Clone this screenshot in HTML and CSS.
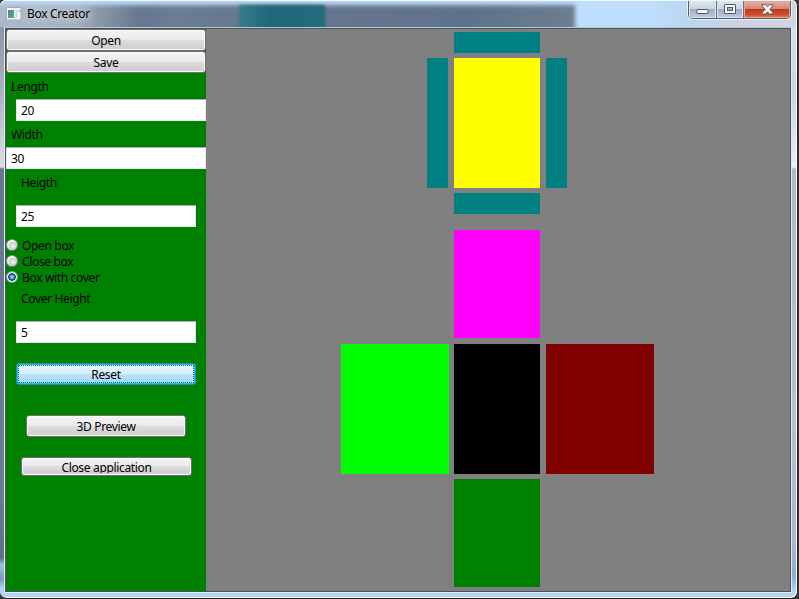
FILE: index.html
```html
<!DOCTYPE html>
<html lang="en">
<head>
<meta charset="utf-8">
<title>Box Creator</title>
<link rel="stylesheet" href="styles.css">
</head>
<body>
<div class="window">
  <header class="titlebar">
    <div class="glass-shadow"></div>
    <div class="glass-teal"></div>
    <svg class="app-icon" width="16" height="14" viewBox="0 0 16 14">
      <defs><linearGradient id="pic" x2="0.6" y2="1"><stop stop-color="#4d7fb8"/><stop offset="1" stop-color="#58a873"/></linearGradient></defs>
      <rect x=".5" y=".5" width="14.500" height="12.500" rx="1" fill="#f3f4f4" stroke="#a4abb1"/>
      <rect x="2" y="3" width="6" height="8" fill="url(#pic)"/>
      <rect x="9" y="3" width="3" height="8" fill="#dde1e3"/>
      <rect x="13" y="3" width="1" height="2" fill="#a5adb5"/>
    </svg>
    <h1 class="title">Box Creator</h1>
    <div class="controls">
      <span class="control control-min"><svg width="13" height="6" viewBox="0 0 13 6"><rect x="1" y=".5" width="11" height="4" rx=".5" fill="#fff" stroke="#535666"/></svg></span>
      <span class="control control-max"><svg width="13" height="11" viewBox="0 0 13 11"><rect x=".5" y=".5" width="11" height="9" rx=".5" fill="#fff" stroke="#535666"/><rect x="3.500" y="3.500" width="5" height="3" fill="#a9b7ca" stroke="#535666"/></svg></span>
      <span class="control control-close"><svg width="13" height="11" viewBox="0 0 13 11"><path d="M1 .7H4.600L6.500 2.800 8.400 .7H12V1.800L8.800 5.300 12 8.800V10H8.400L6.500 7.900 4.600 10H1V8.800L4.200 5.300 1 1.800Z" fill="#fff" stroke="#60505c"/></svg></span>
    </div>
  </header>
  <main class="client">
    <form class="sidebar">
      <button type="button" class="button open">Open</button>
      <button type="button" class="button save">Save</button>
      <label class="label length-label" for="length">Length</label>
      <input class="field length" id="length" value="20">
      <label class="label width-label" for="width">Width</label>
      <input class="field width" id="width" value="30">
      <label class="label height-label" for="height">Heigth</label>
      <input class="field height" id="height" value="25">
      <div class="radios">
        <label class="radio"><span class="dot"></span>Open box</label>
        <label class="radio"><span class="dot"></span>Close box</label>
        <label class="radio"><span class="dot checked"></span>Box with cover</label>
      </div>
      <label class="label cover-label" for="cover">Cover Height</label>
      <input class="field cover" id="cover" value="5">
      <button type="button" class="button reset">Reset</button>
      <button type="button" class="button preview">3D Preview</button>
      <button type="button" class="button close"><span class="clip">Close application</span></button>
    </form>
    <section class="canvas">
      <div class="net lid">
        <div class="north teal"></div>
        <div class="west teal"></div>
        <div class="center yellow"></div>
        <div class="east teal"></div>
        <div class="south teal"></div>
      </div>
      <div class="net box">
        <div class="north magenta"></div>
        <div class="west lime"></div>
        <div class="center black"></div>
        <div class="east maroon"></div>
        <div class="south green"></div>
      </div>
    </section>
  </main>
</div>
</body>
</html>
```
FILE: styles.css
```css
* { box-sizing: border-box; }
html, body { margin: 0; height: 100%; }
body {
  overflow: hidden;
  background: #3b3935;
  font: 12px/16px "Noto Sans", "Open Sans", sans-serif;
  letter-spacing: -0.34px;
  color: #000;
}
.window {
  position: relative;
  width: 798px;
  height: 599px;
  padding: 0 6px 6px 4px;
  border: solid #20242b;
  border-width: 0 1px 1px 0;
  border-radius: 6px 6px 7px 7px;
  box-shadow: inset -1px -1px #fff, inset 0 1px #f3f9ff;
  background:
    linear-gradient(#dce8f4 0, #c9d3df 90px, #ebeef1 167px, #adbacc 169px, #b4c1d2 420px, #a6b7cd 550px, #86adcf 575px, #b2d2f2 590px) right / 7px 100% no-repeat,
    linear-gradient(#c5d6e6 0, #8997a8 30px, #aeb9c5 100px, #d9dee3 167px, #66798f 169px, #667b91 500px, #5e7186 558px, #9ec0df 565px, #7899b9 579px, #b2d2f2 588px) left / 6px 100% no-repeat,
    #b5d5f5;
}
.titlebar {
  position: relative;
  display: flex;
  height: 27px;
  margin: 0 -5px 0 -4px;
  padding-left: 6px;
  overflow: hidden;
  border-radius: 6px 6px 0 0;
  background: linear-gradient(90deg, #b9d9f8 0, #bddefc 650px, #bad6ef 690px, #cbd1dd 735px, #d1d6e0 100%);
  border-top: 1px solid #f3f9ff;
}
.glass-shadow {
  position: absolute;
  left: -5px;
  top: 4px;
  width: 580px;
  height: 30px;
  background: linear-gradient(90deg, #a9bac9 0, #a7b1bd 80px, #8795a6 108px, #657890 145px, #6c7e93 180px, #67798f 230px, #61748b 430px, #5e738a 470px, #6c7e8f 100%);
  filter: blur(2px);
}
.glass-teal {
  position: absolute;
  left: 239px;
  top: 4px;
  width: 86px;
  height: 30px;
  background: linear-gradient(90deg, #367c8c, #1f6979 35%, #216c7a);
  filter: blur(1.500px);
}
.app-icon { position: relative; margin-top: 6px; }
.title {
  position: relative;
  margin: 5px 0 0 5px;
  font: inherit;
  text-shadow: 0 0 7px #d5dde6, 0 0 9px #d5dde6;
}
.controls {
  position: absolute;
  right: 5px;
  top: -1px;
  display: flex;
  width: 103px;
  height: 19px;
  border: 1px solid #515a6c;
  border-top: 0;
  border-radius: 0 0 5px 5px;
  box-shadow: 0 0 0 1px #e9f3fc;
  overflow: hidden;
}
.control {
  display: flex;
  flex: none;
  justify-content: center;
  border-right: 1px solid #657084;
  box-shadow: inset 1px -1px #dbe5ef, inset -1px 0 #dbe5ef;
  background: linear-gradient(#e4ebf3, #c8d4e2 48%, #9cabc0 50%, #bdcde0);
}
.control-min { width: 28px; padding-top: 9px; }
.control-max { width: 27px; padding-top: 4px; }
.control-close {
  width: 46px;
  padding-top: 4px;
  border-right: 0;
  background: linear-gradient(#eab6aa, #d58775 48%, #bc3620 50%, #ce4b2d 80%, #df8459);
  box-shadow: inset 1px -1px #e8a792, inset -1px 0 #e8a792;
}
.client {
  display: flex;
  width: 788px;
  height: 566px;
  border: 1px solid #e4ecf3;
  border-top-color: #b6c8d5;
  background: #808080;
  padding: 1px;
  box-shadow: inset 0 0 0 1px #4a5260;
}
.sidebar {
  display: flex;
  flex-direction: column;
  width: 200px;
  height: 562px;
  background: #008000;
}
.button {
  flex: none;
  display: flex;
  align-items: center;
  justify-content: center;
  height: 22px;
  margin: 0;
  padding: 2px 0 0;
  border: 1px solid #707070;
  border-radius: 3px;
  box-shadow: inset 0 0 0 1px #fafafa;
  background: linear-gradient(#f3f3f3, #ebebeb 50%, #dddddd 50%, #cdcdcd);
  font: inherit;
  letter-spacing: inherit;
  color: #000;
}
.label {
  display: block;
  height: 16px;
  margin-left: 5px;
  flex: none;
}
.field {
  display: block;
  flex: none;
  width: 180px;
  height: 22px;
  margin: 0 0 0 10px;
  padding: 1px 4px 0;
  border: 1px solid #e2e9ef;
  border-top-color: #abadb3;
  border-radius: 1px;
  background: #fff;
  font: inherit;
  letter-spacing: inherit;
  outline: 0;
}
.length-label { margin-top: 6px; }
.length { width: 190px; margin-top: 4px; }
.width-label { margin-top: 6px; }
.width { width: 200px; margin: 4px 0 0; }
.height-label { margin: 6px 0 0 15px; }
.height { margin-top: 14px; }
.radios { margin-top: 11px; }
.radio { display: flex; height: 16px; }
.dot {
  width: 12px;
  height: 12px;
  margin: 1px 4px 0 0;
  border: 1px solid #8e8f8f;
  border-radius: 50%;
  background: radial-gradient(circle at 60% 60%, #f1f1f1 0, #d3d5d8 3px, #bcc0c5 4px, #f4f4f4 4.500px);
}
.checked {
  border-color: #8e9ba3;
  background: radial-gradient(circle at 5px 5px, #b8efff 0, #2a9ed0 2px, #10547c 3px, #17374f 3.500px, #f4f4f4 4px);
}
.cover-label { margin: 5px 0 0 15px; }
.cover { margin-top: 14px; }
.reset {
  position: relative;
  width: 180px;
  margin: 20px 0 0 10px;
  border-color: #3c7fb1;
  box-shadow: inset 0 0 0 1px #00cfff;
  background: linear-gradient(#e7f5fc, #d5effc 50%, #bbe4fa 50%, #a5d8f3);
}
.reset::after {
  position: absolute;
  inset: 1px;
  border: 1px dotted #345b70;
  content: "";
}
.preview { width: 160px; margin: 30px 0 0 20px; }
.close {
  align-items: flex-start;
  width: 171px;
  height: 19px;
  margin: 20px 0 0 15px;
  padding-top: 2px;
}
.clip { height: 13px; overflow: hidden; }
.canvas { padding-top: 3px; }
.net { display: grid; }
.lid {
  grid-template: 21px 5px 130px 5px 21px / 21px 6px 86px 6px 21px;
  margin-left: 221px;
}
.box {
  grid-template: 108px 6px 130px 5px 108px / 108px 5px 86px 6px 108px;
  margin: 16px 0 0 135px;
}
.north { grid-area: 1 / 3; }
.west { grid-area: 3 / 1; }
.center { grid-area: 3 / 3; }
.east { grid-area: 3 / 5; }
.south { grid-area: 5 / 3; }
.teal { background: #008080; }
.yellow { background: #ffff00; }
.magenta { background: #ff00ff; }
.lime { background: #00ff00; }
.black { background: #000; }
.maroon { background: #800000; }
.green { background: #008000; }
```
